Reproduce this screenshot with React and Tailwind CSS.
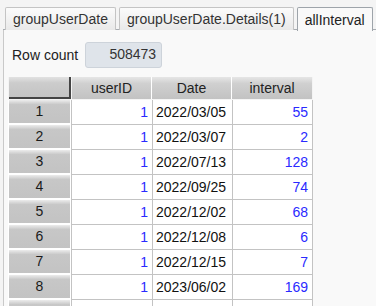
import React from 'react'

const rows = [
  [1, '2022/03/05', 55],
  [1, '2022/03/07', 2],
  [1, '2022/07/13', 128],
  [1, '2022/09/25', 74],
  [1, '2022/12/02', 68],
  [1, '2022/12/08', 6],
  [1, '2022/12/15', 7],
  [1, '2023/06/02', 169],
  ['', '', ''],
]

const tabs = ['groupUserDate', 'groupUserDate.Details(1)', 'allInterval']

export default function App(){
  return (
    <div className="w-[376px] h-[306px] overflow-hidden bg-[#f4f4f4] text-[14px] text-[#222]" style={{fontFamily: '"Liberation Sans", Arial, sans-serif'}}>
      {/* Tabs */}
      <div className="h-[30px] flex items-end pl-[5px] gap-[3px] relative">
        {tabs.map((t, i) => {
          const active = i === tabs.length - 1
          return (
            <div
              key={t}
              className={`h-[23px] px-[7px] flex items-center border border-b-0 rounded-t-[2px] leading-none relative z-10 ${active ? 'bg-[#f9f9f9] border-[#9ea4aa] h-[24px] -mb-[1px]' : 'bg-gradient-to-b from-[#fbfbfb] to-[#e9e9e9] border-[#c4c4c4] text-[#333]'}`}
            >
              {t}
            </div>
          )
        })}
        <div className="absolute left-[3px] right-0 bottom-0 h-px bg-[#a8adb2]"></div>
      </div>

      {/* Panel */}
      <div className="ml-[3px] border-l border-[#c9c9c9] bg-[#f9f9f9] h-[276px]">
        <div className="flex items-center h-[47px] pl-[8px] pt-[2px]">
          <span className="leading-none">Row count</span>
          <div className="ml-[7px] w-[77px] h-[26px] rounded-[3px] bg-[#dfe4ea] border border-[#cdd3da] flex items-center justify-end pr-[5px] text-[#333]">
            508473
          </div>
        </div>

        {/* Table */}
        <div className="ml-[4px] bg-white w-[305px]">
          {/* header */}
          <div className="flex h-[23px] bg-[#f4f4f4]">
            <div className="w-[63px] h-[22px] pl-[1px]">
              <div className="h-full bg-gradient-to-b from-[#e2e2e2] via-[#cccccc] via-30% to-[#c4c4c4] border-r-2 border-b-2 border-[#444]"></div>
            </div>
            <div className="w-[81px] h-[22px] pl-[1px] flex">
              <div className="flex-1 flex items-center justify-center bg-gradient-to-b from-[#e6e6e6] via-[#d0d0d0] via-30% to-[#c2c2c2] border-r border-white">userID</div>
            </div>
            <div className="w-[80px] h-[22px] flex">
              <div className="flex-1 flex items-center justify-center bg-gradient-to-b from-[#e6e6e6] via-[#d0d0d0] via-30% to-[#c2c2c2] border-r border-white">Date</div>
            </div>
            <div className="w-[80px] h-[22px] flex">
              <div className="flex-1 flex items-center justify-center bg-gradient-to-b from-[#e6e6e6] via-[#d0d0d0] via-30% to-[#c2c2c2]">interval</div>
            </div>
          </div>

          {/* body */}
          {rows.map((r, i) => (
            <div key={i} className="flex h-[25px]">
              <div className="w-[63px] h-full pl-[1px] pr-[1px] pb-[2px] bg-white">
                <div className="h-full flex items-center justify-center bg-gradient-to-b from-[#ececec] via-[#c7c7c7] via-20% to-[#c3c3c3] text-[#1a1a1a]">{r[0] === '' ? '' : i + 1}</div>
              </div>
              <div className="w-[81px] border-l border-b border-[#c3c3c3] flex items-center justify-end pr-[4px] text-[#2a2aff]">{r[0]}</div>
              <div className="w-[80px] border-l border-b border-[#c3c3c3] flex items-center pl-[3px] text-[#111]">{r[1]}</div>
              <div className="w-[81px] border-l border-r border-b border-[#c3c3c3] flex items-center justify-end pr-[4px] text-[#2a2aff]">{r[2]}</div>
            </div>
          ))}
        </div>
      </div>
    </div>
  )
}
